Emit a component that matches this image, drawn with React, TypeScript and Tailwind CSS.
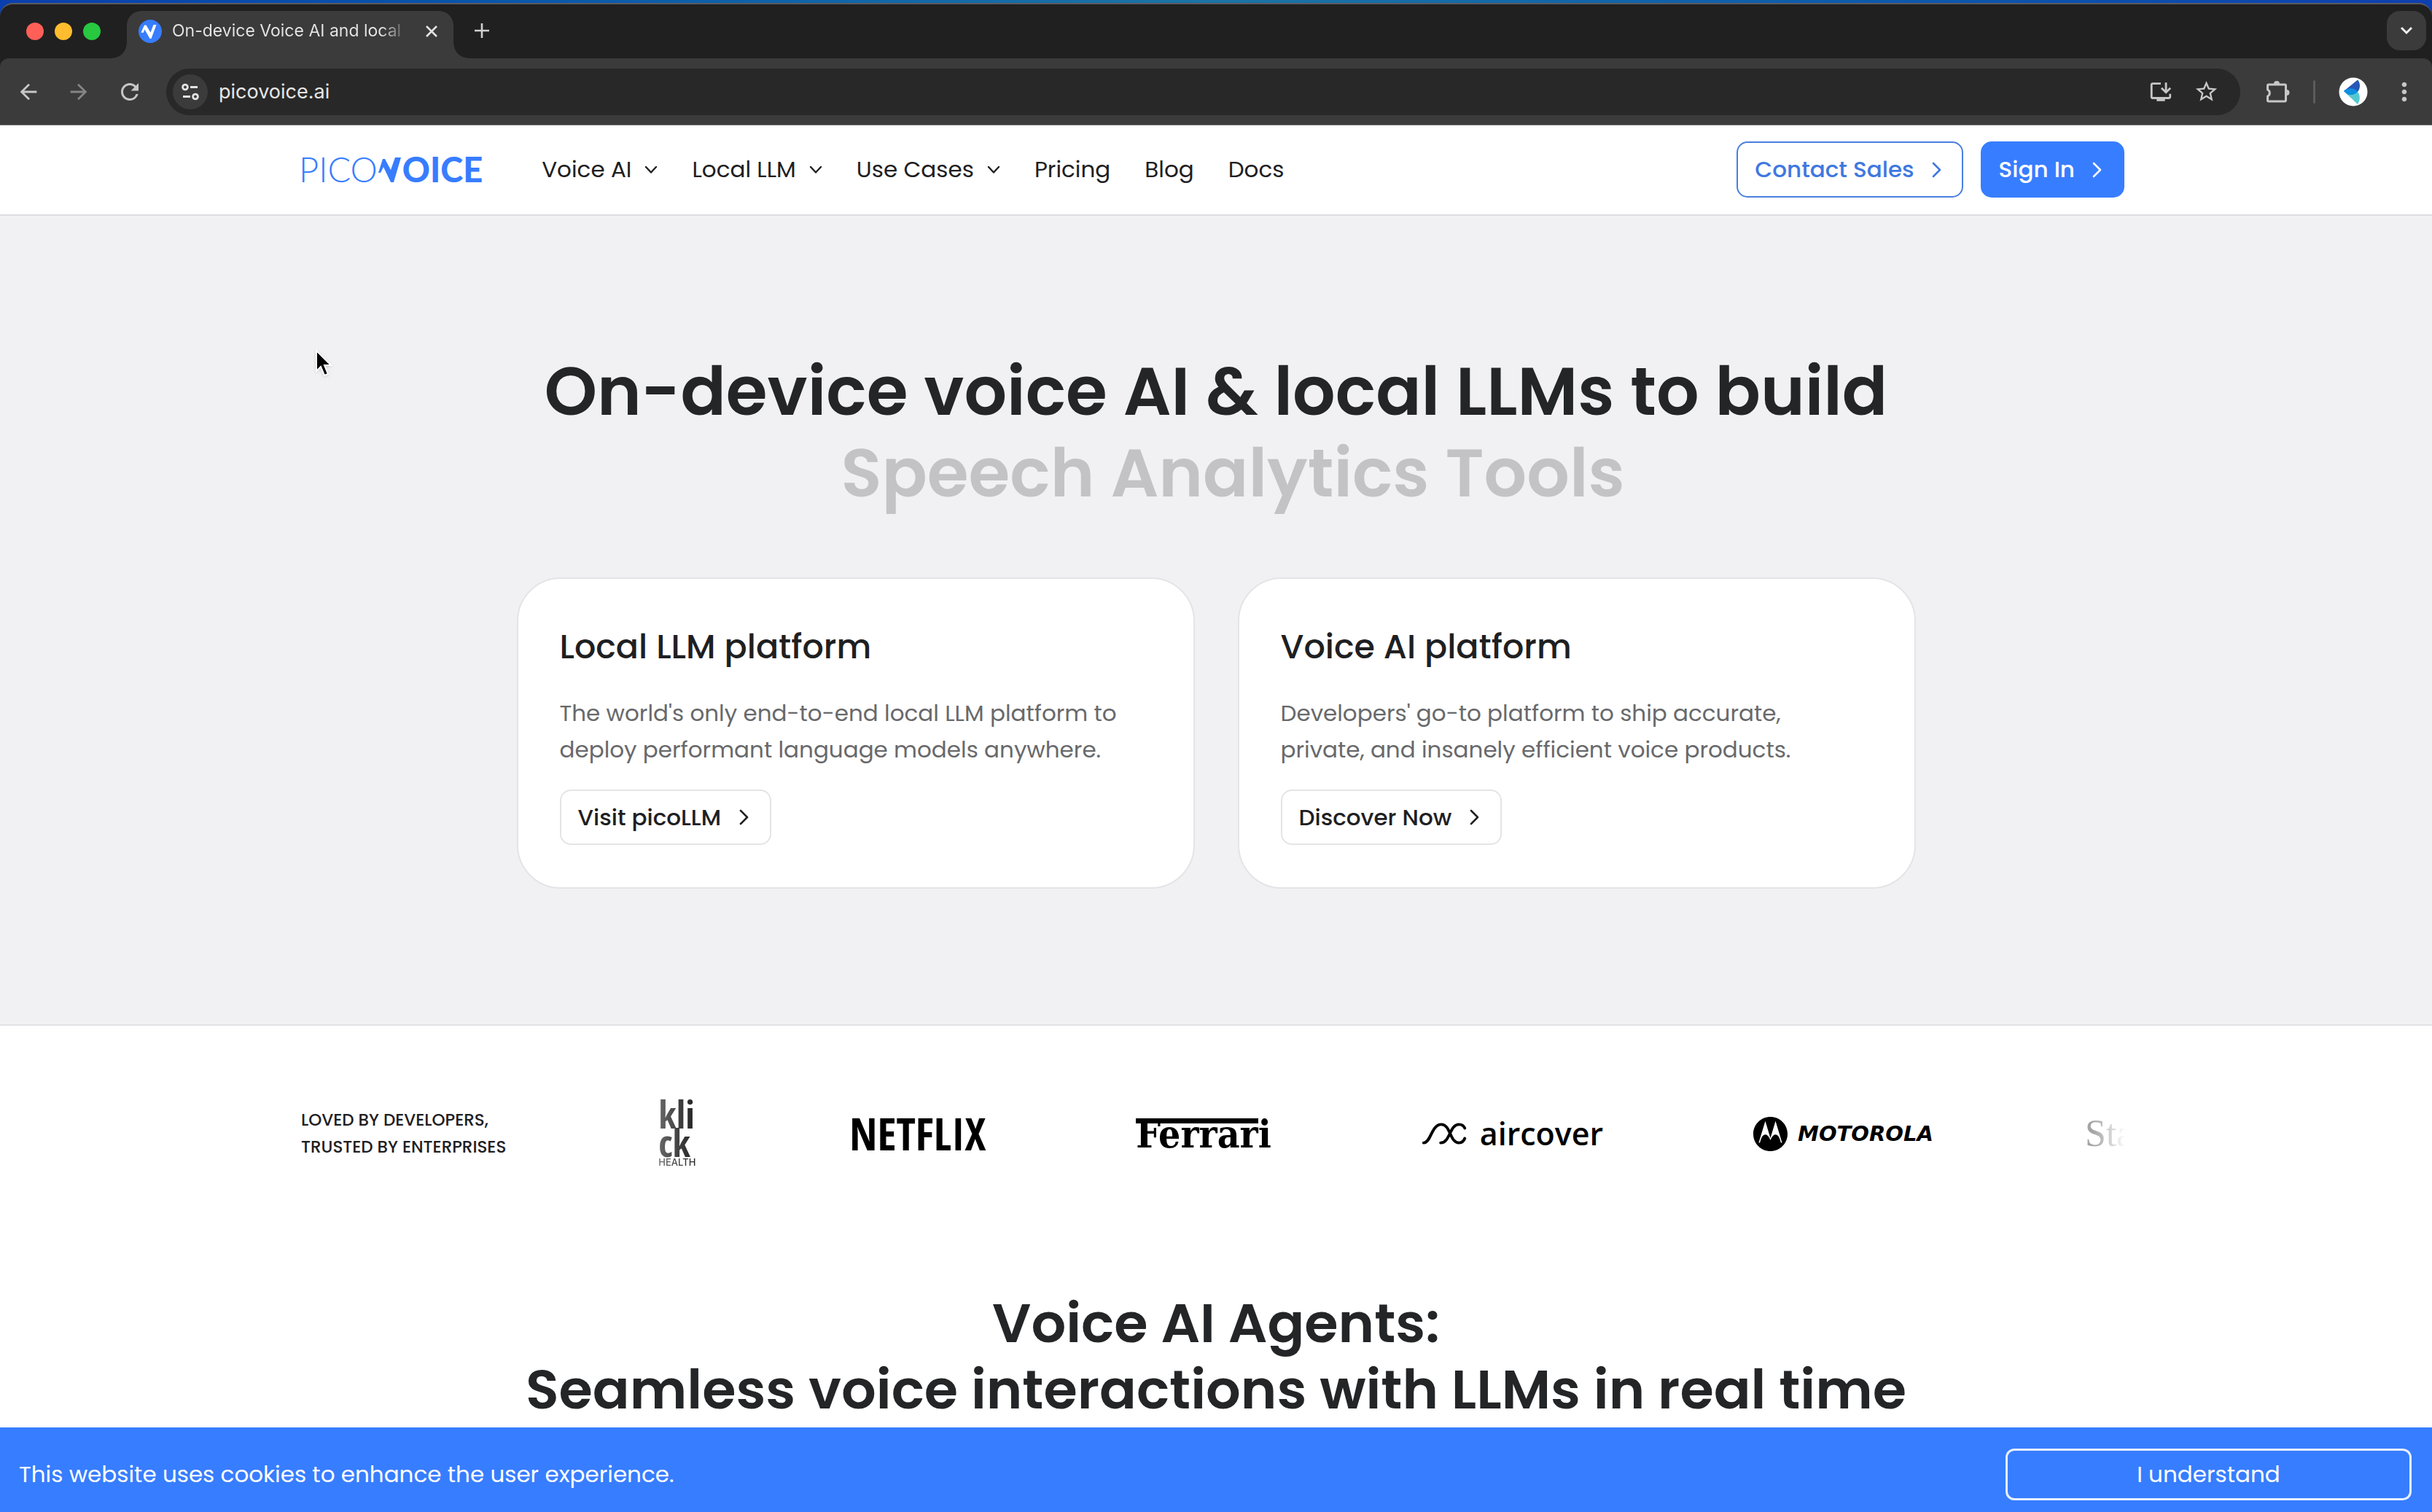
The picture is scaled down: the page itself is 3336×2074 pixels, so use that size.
import React from 'react';
import { MdArrowBack, MdArrowForward, MdInstallDesktop, MdMoreVert, MdRefresh, MdStarBorder } from 'react-icons/md';
import { SiMotorola } from 'react-icons/si';

function ChevronDown() {
  return (
    <svg width="18" height="12" viewBox="0 0 18 12" fill="none" stroke="currentColor" strokeWidth="2.4" strokeLinecap="round" strokeLinejoin="round" aria-hidden="true">
      <path d="M2 2l7 7.500 7-7.500" />
    </svg>
  );
}

function ChevronRight() {
  return (
    <svg width="13" height="22" viewBox="0 0 13 22" fill="none" stroke="currentColor" strokeWidth="2.6" strokeLinecap="round" strokeLinejoin="round" aria-hidden="true">
      <path d="M2 2l9 9-9 9" />
    </svg>
  );
}

function Favicon() {
  return (
    <svg width="32" height="32" viewBox="0 0 32 32" aria-hidden="true">
      <circle cx="16" cy="16" r="16" fill="#377dff" />
      <path d="M3.500 17.500L8 7.500h2.500l6 10L20.500 7h4L17.500 26h-2L8.500 13.500 6.500 18z" fill="#fff" />
    </svg>
  );
}

function BrowserChrome() {
  return (
    <div className="shrink-0 bg-linear-to-r from-[#0b3fae] via-[#1b74a5] to-[#0f3fb0] pt-1 font-['Inter',sans-serif]">
      <div className="rounded-t-[18px] border-t-2 border-[#5a5a60] bg-[#202020]">
        <div className="flex h-[74px] items-end pr-2">
          <div className="flex h-full w-[174px] items-center gap-[15px] pl-9">
            <span className="size-6 rounded-full bg-[#ff5f57]" />
            <span className="size-6 rounded-full bg-[#febc2e]" />
            <span className="size-6 rounded-full bg-[#28c840]" />
          </div>
          <div className="relative flex h-[65px] w-[448px] items-center rounded-t-[20px] bg-[#3b3b3b] pr-[22px] pb-[10px] pl-4">
            <span className="absolute bottom-0 -left-5 size-5 bg-[radial-gradient(circle_at_0_0,transparent_19px,#3b3b3b_20px)]" />
            <span className="absolute -right-5 bottom-0 size-5 bg-[radial-gradient(circle_at_100%_0,transparent_19px,#3b3b3b_20px)]" />
            <Favicon />
            <span className="ml-[14px] w-[326px] overflow-hidden bg-linear-to-r from-[#e6e6e6] from-88% to-[#3b3b3b] bg-clip-text text-[23px] whitespace-nowrap text-transparent">
              On-device Voice AI and local
            </span>
            <button type="button" aria-label="Close tab" className="ml-auto text-[#e3e3e3]">
              <svg width="16" height="16" viewBox="0 0 16 16" stroke="currentColor" strokeWidth="2.6"><path d="M1 1l14 14M15 1L1 15" /></svg>
            </button>
          </div>
          <button type="button" aria-label="New tab" className="mb-[28px] ml-[29px] text-[#d0d0d0]">
            <svg width="20" height="20" viewBox="0 0 20 20" stroke="currentColor" strokeWidth="2.6"><path d="M10 0v20M0 10h20" /></svg>
          </button>
          <button type="button" aria-label="Search tabs" className="mb-[11px] ml-auto grid size-[54px] place-items-center rounded-[18px] bg-[#3b3b3b] text-[#eee]">
            <svg width="18" height="12" viewBox="0 0 18 12" fill="none" stroke="currentColor" strokeWidth="3"><path d="M2 2l7 7 7-7" /></svg>
          </button>
        </div>
        <div className="flex h-[92px] items-center rounded-t-[12px] border-b border-[#777] bg-[#3b3b3b] text-[#c7c7c7]">
          <button type="button" aria-label="Back" className="ml-[22px]"><MdArrowBack size={34} /></button>
          <button type="button" aria-label="Forward" className="ml-[35px] text-[#858585]"><MdArrowForward size={34} /></button>
          <button type="button" aria-label="Reload" className="ml-[35px]"><MdRefresh size={36} /></button>
          <div className="ml-[32px] flex h-16 grow items-center rounded-full bg-[#282828] pr-[29px] pl-[9px]">
            <span className="grid size-[48px] place-items-center rounded-full bg-[#3b3b3b] text-[#e3e3e3]">
              <svg width="26" height="24" viewBox="0 0 26 24" fill="none" stroke="currentColor" strokeWidth="2.8" aria-hidden="true">
                <circle cx="6" cy="5.500" r="3.400" /><path d="M13 5.500h10M3 18.500h10" /><circle cx="20" cy="18.500" r="3.400" />
              </svg>
            </span>
            <input aria-label="Address" defaultValue="picovoice.ai" className="ml-[15px] h-12 grow bg-transparent text-[27px] text-[#e6e6e6] outline-none" />
            <button type="button" aria-label="Install app"><MdInstallDesktop size={34} /></button>
            <button type="button" aria-label="Bookmark" className="ml-7"><MdStarBorder size={35} /></button>
          </div>
          <button type="button" aria-label="Extensions" className="ml-[34px]">
            <svg width="34" height="34" viewBox="0 0 34 34" fill="none" aria-hidden="true">
              <path d="M5 7h22q1.500 0 1.500 1.500v20q0 1.500-1.500 1.500H5q-1.500 0-1.500-1.500v-5.500a5 5 0 0 0 0-9V8.500Q3.500 7 5 7z" stroke="currentColor" strokeWidth="3" strokeLinejoin="round" />
              <path d="M12 6a4 4 0 0 1 8 0zM29.500 14a4 4 0 0 1 0 8z" fill="currentColor" />
            </svg>
          </button>
          <span className="ml-[32px] h-8 w-[3px] rounded bg-[#5c5c5c]" />
          <button type="button" aria-label="Profile" className="ml-[32px]">
            <svg width="40" height="40" viewBox="0 0 40 40" aria-hidden="true">
              <circle cx="20" cy="20" r="19.500" fill="#fff" />
              <path d="M26 3.500C30 8 30 15 26 20L7 19z" fill="#2557b8" />
              <path d="M26 20c4 5 3.500 12 0 17L7 19z" fill="#55c8cf" />
              <path d="M7 19c5-5 14-5 19 .500-4 5.500-11 5-14 4z" fill="#0f8fe0" />
            </svg>
          </button>
          <button type="button" aria-label="Menu" className="mr-[18px] ml-[30px]"><MdMoreVert size={40} /></button>
        </div>
      </div>
    </div>
  );
}

function PicovoiceLogo() {
  return (
    <a href="#home" aria-label="Picovoice" className="flex items-center font-['Lato',sans-serif] text-[47px] leading-none text-[#377dff]">
      <span className="font-light">PICO</span>
      <svg width="34" height="34" viewBox="0 0 34 34" fill="#377dff" aria-hidden="true">
        <path d="M1 21L7 2h3l8 15 6-17h8L22 34h-4L8 13 4 21z" />
      </svg>
      <span className="font-black">OICE</span>
    </a>
  );
}

const menus = ['Voice AI', 'Local LLM', 'Use Cases'];
const links = ['Pricing', 'Blog', 'Docs'];

function SiteHeader() {
  return (
    <header className="flex h-[124px] shrink-0 items-center border-b-2 border-[#dedfe3] bg-white pr-[422px] pb-px pl-[410px] text-[31px]">
      <PicovoiceLogo />
      <nav className="ml-[81px] flex items-center gap-[47px] text-[#1e2022]">
        {menus.map((label) => (
          <button type="button" key={label} className="flex items-center gap-[18px]">
            {label}
            <ChevronDown />
          </button>
        ))}
        {links.map((label) => (
          <a href="#nav" key={label}>{label}</a>
        ))}
      </nav>
      <div className="ml-auto flex gap-6 font-medium">
        <a href="#contact" className="flex h-[77px] items-center gap-6 rounded-[15px] border-2 border-[#4a7fe0] pr-[28px] pl-[23px] text-[#3f78e0]">
          Contact Sales
          <ChevronRight />
        </a>
        <a href="#signin" className="flex h-[77px] items-center gap-6 rounded-[15px] border-2 border-[#377dff] bg-[#377dff] pr-[29px] pl-[23px] text-white">
          Sign In
          <ChevronRight />
        </a>
      </div>
    </header>
  );
}

const cards = [
  {
    title: 'Local LLM platform',
    lines: ["The world's only end-to-end local LLM platform to", 'deploy performant language models anywhere.'],
    action: 'Visit picoLLM',
  },
  {
    title: 'Voice AI platform',
    lines: ["Developers' go-to platform to ship accurate,", 'private, and insanely efficient voice products.'],
    action: 'Discover Now',
  },
];

function Hero() {
  return (
    <section className="border-b-2 border-[#e1e2e5] bg-[#f1f1f4] pt-[185px] pb-[186px]">
      <h1 className="text-center text-[92px] leading-[112px] font-semibold text-[#242527]">
        On-device voice AI &amp; local LLMs to build
        <span className="block pl-[46px] text-[#c3c3c5]">Speech Analytics Tools</span>
      </h1>
      <div className="mx-auto mt-[87px] grid w-[1919px] max-w-full grid-cols-2 gap-[59px]">
        {cards.map((card) => (
          <article key={card.title} className="rounded-[60px] border-2 border-[#e3e4e6] bg-white px-[57px] pt-[65px] pb-[58px]">
            <h2 className="text-[46px] leading-[56px] font-medium text-[#1e2022]">{card.title}</h2>
            <p className="mt-[38px] text-[31px] leading-[50px] text-[#68696b]">
              {card.lines[0]}
              <br />
              {card.lines[1]}
            </p>
            <a href="#platform" className="mt-[30px] inline-flex h-[76px] items-center gap-[25px] rounded-[15px] border-2 border-[#e3e4e6] pr-[29px] pl-[23px] text-[31px] font-medium text-[#1e2022]">
              {card.action}
              <ChevronRight />
            </a>
          </article>
        ))}
      </div>
    </section>
  );
}

function Logos() {
  return (
    <section className="flex items-center pt-[102px] pr-[422px] pl-[413px]">
      <p className="text-[23px] leading-[37px] font-medium whitespace-nowrap text-[#1e2022]">
        LOVED BY DEVELOPERS,
        <br />
        TRUSTED BY ENTERPRISES
      </p>
      <div className="ml-[209px] flex h-[92px] grow items-center justify-between text-black">
        <div className="w-[56px] bg-linear-to-r from-[#6a6a6a] to-[#1c1c1c] bg-clip-text font-['Open_Sans_Condensed','Roboto_Condensed',sans-serif] text-[52px] leading-[39px] font-bold text-transparent">
          <div>kli</div>
          <div>ck</div>
          <div className="font-['Inter',sans-serif] text-[13px] leading-[16px] font-medium">HEALTH</div>
        </div>
        <div className="w-[187px] font-['Open_Sans_Condensed','Roboto_Condensed',sans-serif] text-[61px] leading-[56px] font-bold">NETFLIX</div>
        <div className="relative w-[187px] font-['DejaVu_Serif_Condensed','DejaVu_Serif',serif] text-[53px] leading-[53px] font-bold">
          Ferrari
          <span className="absolute top-[5px] left-0 h-[7px] w-[168px] bg-black" />
        </div>
        <div className="flex w-[248px] items-center gap-[18px] font-['Open_Sans',sans-serif] text-[43px] leading-[60px] font-semibold">
          <svg width="65" height="32" viewBox="0 0 65 32" fill="none" stroke="#000" strokeWidth="4.200" strokeLinecap="round" aria-hidden="true">
            <path d="M2 29.500C13 29.500 13 2.500 28 2.500C42 2.500 40 29.500 54 29.500Q60 29.500 62.500 23" />
            <path d="M27 29.500C41 29.500 40 2.500 54 2.500Q60 2.500 62.500 8" />
          </svg>
          aircover
        </div>
        <div className="flex w-[249px] items-center gap-[14px]">
          <SiMotorola size={47} />
          <span className="font-['DejaVu_Sans',sans-serif] text-[29px] leading-[40px] font-bold italic">MOTOROLA</span>
        </div>
        <div className="w-[54px] bg-linear-to-r from-[#a4a4a4] from-20% to-[#fafafa] bg-clip-text font-['Liberation_Serif',serif] text-[52px] leading-[60px] text-transparent">Sta</div>
      </div>
    </section>
  );
}

function CookieBar() {
  return (
    <aside className="flex h-[116px] shrink-0 items-center justify-between bg-[#377dff] pt-3 pr-7 pl-[26px] text-[31px] text-white">
      <p>This website uses cookies to enhance the user experience.</p>
      <button type="button" className="h-[71px] w-[557px] rounded-[12px] border-[3px] border-[#e6f0ff]">I understand</button>
    </aside>
  );
}

function Cursor() {
  return (
    <svg className="pointer-events-none absolute top-[479px] left-[432px] drop-shadow" width="24" height="38" viewBox="0 0 24 38" aria-hidden="true">
      <path d="M2 2v28l6-6 5 12 5-2-5-12h9z" fill="#000" stroke="#fff" strokeWidth="2" />
    </svg>
  );
}

export default function App() {
  return (
    <div className="relative flex h-screen flex-col overflow-hidden bg-white font-['Poppins','Inter',sans-serif]">
      <BrowserChrome />
      <SiteHeader />
      <main className="min-h-0 grow overflow-hidden">
        <Hero />
        <Logos />
        <h2 className="mt-[168px] text-center text-[75px] leading-[91px] font-semibold text-[#242527]">
          Voice AI Agents:
          <br />
          Seamless voice interactions with LLMs in real time
        </h2>
      </main>
      <CookieBar />
      <Cursor />
    </div>
  );
}
